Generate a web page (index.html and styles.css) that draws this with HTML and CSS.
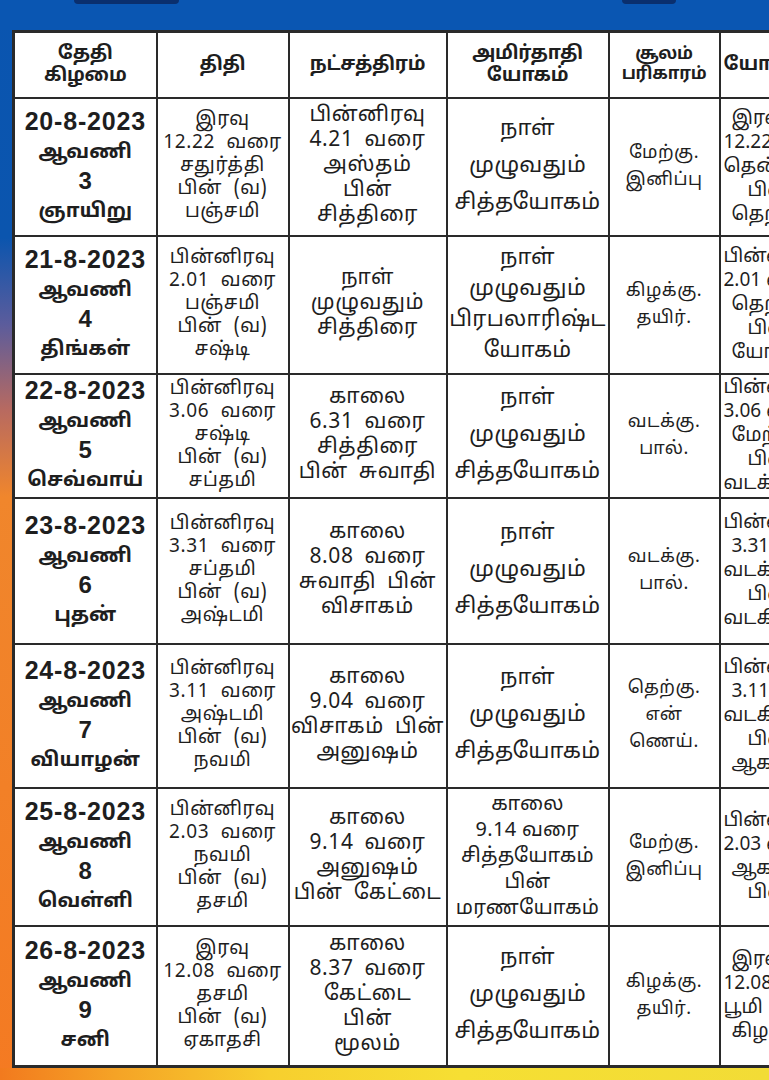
FILE: index.html
```html
<!DOCTYPE html>
<html lang="ta">
<head>
<meta charset="utf-8">
<title>பஞ்சாங்கம்</title>
<link rel="stylesheet" href="styles.css">
</head>
<body>
<div class="page">
  <div class="topbar">
    <span class="tab tab-left"></span>
    <span class="tab tab-right"></span>
  </div>
  <div class="sheet">
    <table class="panchang">
      <colgroup>
        <col class="c1"><col class="c2"><col class="c3"><col class="c4"><col class="c5"><col class="c6">
      </colgroup>
      <thead>
        <tr class="head">
          <th>தேதி<br>கிழமை</th>
          <th>திதி</th>
          <th>நட்சத்திரம்</th>
          <th>அமிர்தாதி<br>யோகம்</th>
          <th class="small">சூலம்<br>பரிகாரம்</th>
          <th class="left">யோகம்</th>
        </tr>
      </thead>
      <tbody>
        <tr class="r1">
          <td class="date"><span class="d">20-8-2023</span><br>ஆவணி<br><span class="n">3</span><br>ஞாயிறு</td>
          <td class="tithi">இரவு<br>12.22 வரை<br>சதுர்த்தி<br>பின் (வ)<br>பஞ்சமி</td>
          <td class="star">பின்னிரவு<br>4.21 வரை<br>அஸ்தம்<br>பின்<br>சித்திரை</td>
          <td class="amirt">நாள்<br>முழுவதும்<br>சித்தயோகம்</td>
          <td class="soolam">மேற்கு.<br>இனிப்பு</td>
          <td class="yoga"><span class="ind">இரவு</span><br>12.22 வரை<br>தென்மேற்கு<br><span class="ind2">பின்</span><br><span class="ind">தெற்கு</span></td>
        </tr>
        <tr class="r2">
          <td class="date"><span class="d">21-8-2023</span><br>ஆவணி<br><span class="n">4</span><br>திங்கள்</td>
          <td class="tithi">பின்னிரவு<br>2.01 வரை<br>பஞ்சமி<br>பின் (வ)<br>சஷ்டி</td>
          <td class="star">நாள்<br>முழுவதும்<br>சித்திரை</td>
          <td class="amirt four">நாள்<br>முழுவதும்<br>பிரபலாரிஷ்ட<br>யோகம்</td>
          <td class="soolam">கிழக்கு.<br>தயிர்.</td>
          <td class="yoga">பின்னிரவு<br>2.01 வரை<br><span class="ind">தெற்கு</span><br><span class="ind2">பின்</span><br><span class="ind">யோகம்</span></td>
        </tr>
        <tr class="r3">
          <td class="date"><span class="d">22-8-2023</span><br>ஆவணி<br><span class="n">5</span><br>செவ்வாய்</td>
          <td class="tithi">பின்னிரவு<br>3.06 வரை<br>சஷ்டி<br>பின் (வ)<br>சப்தமி</td>
          <td class="star">காலை<br>6.31 வரை<br>சித்திரை<br>பின் சுவாதி</td>
          <td class="amirt">நாள்<br>முழுவதும்<br>சித்தயோகம்</td>
          <td class="soolam">வடக்கு.<br>பால்.</td>
          <td class="yoga">பின்னிரவு<br>3.06 வரை<br><span class="ind">மேற்கு</span><br><span class="ind2">பின்</span><br>வடக்கு</td>
        </tr>
        <tr class="r4">
          <td class="date"><span class="d">23-8-2023</span><br>ஆவணி<br><span class="n">6</span><br>புதன்</td>
          <td class="tithi">பின்னிரவு<br>3.31 வரை<br>சப்தமி<br>பின் (வ)<br>அஷ்டமி</td>
          <td class="star">காலை<br>8.08 வரை<br>சுவாதி பின்<br>விசாகம்</td>
          <td class="amirt">நாள்<br>முழுவதும்<br>சித்தயோகம்</td>
          <td class="soolam">வடக்கு.<br>பால்.</td>
          <td class="yoga">பின்னிரவு<br><span class="ind">3.31 வரை</span><br>வடக்கு<br><span class="ind2">பின்</span><br>வடகிழக்கு</td>
        </tr>
        <tr class="r5">
          <td class="date"><span class="d">24-8-2023</span><br>ஆவணி<br><span class="n">7</span><br>வியாழன்</td>
          <td class="tithi">பின்னிரவு<br>3.11 வரை<br>அஷ்டமி<br>பின் (வ)<br>நவமி</td>
          <td class="star">காலை<br>9.04 வரை<br>விசாகம் பின்<br>அனுஷம்</td>
          <td class="amirt">நாள்<br>முழுவதும்<br>சித்தயோகம்</td>
          <td class="soolam">தெற்கு.<br>என்<br>ணெய்.</td>
          <td class="yoga">பின்னிரவு<br><span class="ind">3.11 வரை</span><br>வடகிழக்கு<br><span class="ind2">பின்</span><br><span class="ind">ஆகாயம்</span></td>
        </tr>
        <tr class="r6">
          <td class="date"><span class="d">25-8-2023</span><br>ஆவணி<br><span class="n">8</span><br>வெள்ளி</td>
          <td class="tithi">பின்னிரவு<br>2.03 வரை<br>நவமி<br>பின் (வ)<br>தசமி</td>
          <td class="star">காலை<br>9.14 வரை<br>அனுஷம்<br>பின் கேட்டை</td>
          <td class="amirt mid">காலை<br>9.14 வரை<br>சித்தயோகம்<br>பின்<br>மரணயோகம்</td>
          <td class="soolam">மேற்கு.<br>இனிப்பு</td>
          <td class="yoga">பின்னிரவு<br>2.03 வரை<br><span class="ind">ஆகாயம்</span><br><span class="ind2">பின்</span></td>
        </tr>
        <tr class="r7">
          <td class="date"><span class="d">26-8-2023</span><br>ஆவணி<br><span class="n">9</span><br>சனி</td>
          <td class="tithi">இரவு<br>12.08 வரை<br>தசமி<br>பின் (வ)<br>ஏகாதசி</td>
          <td class="star">காலை<br>8.37 வரை<br>கேட்டை<br>பின்<br>மூலம்</td>
          <td class="amirt">நாள்<br>முழுவதும்<br>சித்தயோகம்</td>
          <td class="soolam">கிழக்கு.<br>தயிர்.</td>
          <td class="yoga"><span class="ind">இரவு</span><br>12.08 வரை<br>பூமி<br><span class="ind">கிழக்கு</span></td>
        </tr>
      </tbody>
    </table>
  </div>
  <div class="bottombar"></div>
</div>
</body>
</html>
```

FILE: styles.css
```css
html, body {
  margin: 0;
  padding: 0;
}
body {
  width: 769px;
  height: 1080px;
  overflow: hidden;
  font-family: "Noto Sans Tamil", "Lohit Tamil", "Latha", "Noto Sans", "DejaVu Sans", sans-serif;
  color: #1e1e1e;
}
.page {
  width: 769px;
  height: 1080px;
  overflow: hidden;
  display: flex;
  flex-direction: column;
  background: linear-gradient(to bottom, #0a55b0 0%, #0b55ae 22%, #5b5c9c 30%, #b86a60 38%, #f0862c 46%, #f47a22 100%);
}
.topbar {
  height: 30px;
  flex: none;
  position: relative;
  background: #0a56b2;
}
.tab {
  position: absolute;
  top: -6px;
  height: 10px;
  border-radius: 4px;
  background: #0a2f6e;
}
.tab-left { left: 74px; width: 105px; }
.tab-right { left: 622px; width: 54px; }
.sheet {
  flex: none;
  padding-left: 12px;
  overflow: hidden;
  height: 1038px;
}
.panchang {
  border-collapse: collapse;
  table-layout: fixed;
  width: 838px;
  background: #fff;
  border: 3px solid #2a2a2a;
}
.c1 { width: 143px; }
.c2 { width: 132px; }
.c3 { width: 158px; }
.c4 { width: 162px; }
.c5 { width: 111px; }
.c6 { width: 132px; }
th, td {
  border: 2px solid #2a2a2a;
  text-align: center;
  vertical-align: middle;
  padding: 0 1px;
  white-space: nowrap;
  overflow: hidden;
}
.head { height: 66px; }
th {
  font-size: 19px;
  font-weight: 700;
  line-height: 22px;
  letter-spacing: -0.3px;
}
th.small { font-size: 17px; line-height: 20px; }
th.left, td.yoga { text-align: left; padding-left: 3px; }
.r1 { height: 138px; }
.r2 { height: 138px; }
.r3 { height: 124px; }
.r4 { height: 146px; }
.r5 { height: 144px; }
.r6 { height: 138px; }
.r7 { height: 141px; }
td.date {
  font-weight: 700;
  font-size: 20px;
  line-height: 28px;
}
td.date .d {
  font-family: "Liberation Sans", Arial, sans-serif;
  font-size: 25px;
  letter-spacing: 0.8px;
}
td.date .n {
  font-family: "Liberation Sans", Arial, sans-serif;
  font-size: 24px;
}
td.tithi {
  font-size: 19px;
  line-height: 23px;
  word-spacing: 6px;
  letter-spacing: 0.6px;
}
td.star {
  font-size: 21px;
  line-height: 25px;
  word-spacing: 5px;
  letter-spacing: 0.6px;
}
td.amirt {
  font-size: 22px;
  line-height: 37px;
  letter-spacing: 0.3px;
}
td.amirt.four {
  line-height: 31px;
}
td.amirt.mid {
  font-size: 20px;
  line-height: 26px;
}
td.soolam {
  font-size: 18px;
  line-height: 27px;
  letter-spacing: 0.5px;
}
td.yoga {
  font-size: 19px;
  line-height: 24px;
}
.ind { padding-left: 8px; }
.ind2 { padding-left: 24px; }
.bottombar {
  flex: 1;
  background: linear-gradient(to right, #f27a1e 0%, #f5a326 15%, #f7cf2e 35%, #f6df33 60%, #f2dc36 100%);
}
```
